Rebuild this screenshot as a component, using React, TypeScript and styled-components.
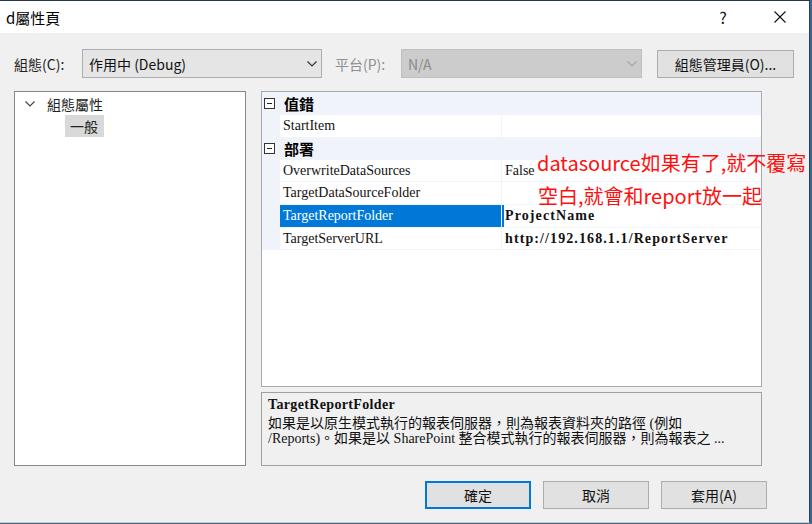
import React from "react";
import styled, { createGlobalStyle } from "styled-components";

const UI = `"Noto Sans CJK TC", "Noto Sans", sans-serif`;
const SERIF = `"Liberation Serif", "Noto Sans CJK TC", serif`;

const Global = createGlobalStyle`
  html, body { margin: 0; padding: 0; }
  body {
    width: 812px; height: 524px; overflow: hidden;
    background: #3b6790;
    font-family: ${UI};
  }
`;

const Window = styled.div`
  position: relative;
  width: 809px;
  height: 521px;
  border-top: 1px solid #22374a;
  border-right: 1px solid #2a3f53;
  border-bottom: 1px solid #c9c9c9;
  background: #f0f0f0;
  display: flex;
  flex-direction: column;
  overflow: hidden;
`;

const TitleBar = styled.div`
  height: 32px;
  background: #ffffff;
  display: flex;
  align-items: center;
  padding-left: 6px;
  font-size: 15px;
  color: #000;
`;

const Title = styled.div`
  flex: 1;
`;

const TitleButton = styled.div<{ $mr?: number }>`
  width: 46px;
  height: 32px;
  margin-right: ${(p) => p.$mr ?? 0}px;
  display: flex;
  align-items: center;
  justify-content: center;
  font-size: 16px;
  color: #111;
`;

const Body = styled.div`
  flex: 1;
  display: flex;
  flex-direction: column;
  padding: 16px 0 0 14px;
`;

const TopRow = styled.div`
  display: flex;
  align-items: center;
  height: 29px;
`;

const Label = styled.span<{ $disabled?: boolean }>`
  font-size: 14px;
  color: ${(p) => (p.$disabled ? "#8f8f8f" : "#222")};
  width: ${(p) => (p.$disabled ? "66px" : "68px")};
  white-space: nowrap;
`;

const Combo = styled.div<{ $disabled?: boolean }>`
  width: ${(p) => (p.$disabled ? "241px" : "240px")};
  height: 29px;
  box-sizing: border-box;
  border: 1px solid ${(p) => (p.$disabled ? "#bfbfbf" : "#adadad")};
  background: ${(p) => (p.$disabled ? "#cccccc" : "#e5e5e5")};
  color: ${(p) => (p.$disabled ? "#8a8a8a" : "#111")};
  display: flex;
  align-items: center;
  padding: 0 4px 0 6px;
  font-size: 14px;
  margin-right: ${(p) => (p.$disabled ? "15px" : "13px")};
`;

const ComboText = styled.span`
  flex: 1;
`;

const Button = styled.div<{ $default?: boolean; $w: number; $h?: number }>`
  width: ${(p) => p.$w}px;
  height: ${(p) => p.$h ?? 28}px;
  box-sizing: border-box;
  border: ${(p) => (p.$default ? "2px solid #0078d7" : "1px solid #adadad")};
  background: #e1e1e1;
  display: flex;
  align-items: center;
  justify-content: center;
  font-size: 14px;
  color: #111;
`;

const Main = styled.div`
  display: flex;
  gap: 15px;
  margin-top: 13px;
  height: 375px;
`;

const Tree = styled.div`
  width: 232px;
  box-sizing: border-box;
  border: 1px solid #828790;
  background: #fff;
  padding-top: 1px;
`;

const TreeRow = styled.div<{ $indent: number }>`
  display: flex;
  align-items: center;
  height: 22px;
  padding-left: ${(p) => p.$indent}px;
  font-size: 14px;
  color: #222;
`;

const Chevron = styled.span`
  width: 22px;
  display: flex;
  align-items: center;
`;

const TreeSel = styled.span`
  background: #d9d9d9;
  padding: 0 6px 0 5px;
  height: 22px;
  display: flex;
  align-items: center;
`;

const RightCol = styled.div`
  width: 501px;
  display: flex;
  flex-direction: column;
  gap: 5px;
`;

const Grid = styled.div`
  height: 296px;
  box-sizing: border-box;
  border: 1px solid #a5a9b0;
  background: #fff;
`;

const GridRows = styled.div`
  background: #f0f3f9;
  display: flex;
  flex-direction: column;
  gap: 1px;
  padding-bottom: 1px;
`;

const CatRow = styled.div<{ $h: number }>`
  height: ${(p) => p.$h}px;
  display: flex;
  align-items: center;
  font-family: ${UI};
  font-weight: 700;
  font-size: 15px;
  color: #000;
`;

const ExpandBox = styled.span`
  position: relative;
  width: 9px;
  height: 9px;
  border: 1px solid #333;
  margin: 0 9px 0 2px;
  background: #fff;
  &::after {
    content: "";
    position: absolute;
    left: 2px;
    right: 2px;
    top: 4px;
    height: 1px;
    background: #222;
  }
`;

const PropRow = styled.div<{ $h: number }>`
  height: ${(p) => p.$h}px;
  display: grid;
  grid-template-columns: 221px 1fr;
  column-gap: 1px;
  margin-left: 18px;
`;

const NameCell = styled.div<{ $sel?: boolean }>`
  background: ${(p) => (p.$sel ? "#0078d7" : "#fff")};
  color: ${(p) => (p.$sel ? "#fff" : "#111")};
  font-family: ${SERIF};
  font-size: 14px;
  display: flex;
  align-items: center;
  padding-left: 3px;
  white-space: nowrap;
  overflow: hidden;
`;

const ValueCell = styled.div<{ $bold?: boolean; $sel?: boolean }>`
  background: #fff;
  color: #111;
  font-family: ${SERIF};
  font-size: 14px;
  font-weight: ${(p) => (p.$bold ? 700 : 400)};
  letter-spacing: ${(p) => (p.$bold ? "1.1px" : "0")};
  display: flex;
  align-items: center;
  padding-left: ${(p) => (p.$sel ? "1px" : "3px")};
  border-left: ${(p) => (p.$sel ? "2px solid #0078d7" : "none")};
  white-space: nowrap;
  overflow: hidden;
`;

const Desc = styled.div`
  height: 74px;
  box-sizing: border-box;
  border: 1px solid #a0a0a0;
  background: #f0f0f0;
  padding: 3px 0 0 6px;
`;

const DescTitle = styled.div`
  font-family: ${SERIF};
  font-weight: 700;
  font-size: 14px;
  letter-spacing: 0.35px;
  line-height: 17px;
  color: #111;
`;

const DescText = styled.div`
  margin-top: 3px;
  font-family: ${SERIF};
  font-size: 14px;
  line-height: 15px;
  color: #111;
  white-space: nowrap;
  overflow: hidden;
`;

const ButtonRow = styled.div`
  display: flex;
  gap: 12px;
  justify-content: flex-end;
  margin-top: 15px;
  padding-right: 42px;
`;

const Note = styled.div`
  position: absolute;
  left: 537px;
  top: 145px;
  font-family: ${UI};
  font-size: 20px;
  line-height: 33px;
  color: #ff1010;
  white-space: nowrap;
`;

const NoteLine = styled.div<{ $indent?: number }>`
  padding-left: ${(p) => p.$indent ?? 0}px;
`;

const DownArrow = ({ color = "#333" }: { color?: string }) => (
  <svg width="10" height="6" viewBox="0 0 10 6">
    <path d="M0.5 0.5 L5 5 L9.5 0.5" fill="none" stroke={color} strokeWidth="1.2" />
  </svg>
);

const props = [
  { name: "OverwriteDataSources", value: "False", h: 21 },
  { name: "TargetDataSourceFolder", value: "", h: 22 },
  { name: "TargetReportFolder", value: "ProjectName", bold: true, sel: true, h: 22 },
  { name: "TargetServerURL", value: "http://192.168.1.1/ReportServer", bold: true, h: 21 },
];

export default function App() {
  return (
    <>
      <Global />
      <Window>
        <TitleBar>
          <Title>d屬性頁</Title>
          <TitleButton $mr={11}>?</TitleButton>
          <TitleButton>
            <svg width="12" height="12" viewBox="0 0 12 12">
              <path d="M0.5 0.5 L11.5 11.5 M11.5 0.5 L0.5 11.5" stroke="#111" strokeWidth="1.1" />
            </svg>
          </TitleButton>
          <div style={{ width: 6 }} />
        </TitleBar>
        <Body>
          <TopRow>
            <Label>組態(C):</Label>
            <Combo>
              <ComboText>作用中 (Debug)</ComboText>
              <DownArrow />
            </Combo>
            <Label $disabled>平台(P):</Label>
            <Combo $disabled>
              <ComboText>N/A</ComboText>
              <DownArrow color="#a8a8a8" />
            </Combo>
            <Button $w={137}>組態管理員(O)...</Button>
          </TopRow>
          <Main>
            <Tree>
              <TreeRow $indent={10}>
                <Chevron>
                  <DownArrow color="#444" />
                </Chevron>
                組態屬性
              </TreeRow>
              <TreeRow $indent={50}>
                <TreeSel>一般</TreeSel>
              </TreeRow>
            </Tree>
            <RightCol>
              <Grid>
                <GridRows>
                  <CatRow $h={22}>
                    <ExpandBox />
                    值錯
                  </CatRow>
                  <PropRow $h={22}>
                    <NameCell>StartItem</NameCell>
                    <ValueCell />
                  </PropRow>
                  <CatRow $h={21}>
                    <ExpandBox />
                    部署
                  </CatRow>
                  {props.map((p) => (
                    <PropRow key={p.name} $h={p.h}>
                      <NameCell $sel={p.sel}>{p.name}</NameCell>
                      <ValueCell $bold={p.bold} $sel={p.sel}>
                        {p.value}
                      </ValueCell>
                    </PropRow>
                  ))}
                </GridRows>
              </Grid>
              <Desc>
                <DescTitle>TargetReportFolder</DescTitle>
                <DescText>
                  如果是以原生模式執行的報表伺服器，則為報表資料夾的路徑 (例如
                  <br />
                  /Reports)。如果是以 SharePoint 整合模式執行的報表伺服器，則為報表之 ...
                </DescText>
              </Desc>
            </RightCol>
          </Main>
          <ButtonRow>
            <Button $default $w={106}>確定</Button>
            <Button $w={106}>取消</Button>
            <Button $w={106}>套用(A)</Button>
          </ButtonRow>
        </Body>
        <Note>
          <NoteLine>datasource如果有了,就不覆寫</NoteLine>
          <NoteLine $indent={1}>空白,就會和report放一起</NoteLine>
        </Note>
      </Window>
    </>
  );
}
